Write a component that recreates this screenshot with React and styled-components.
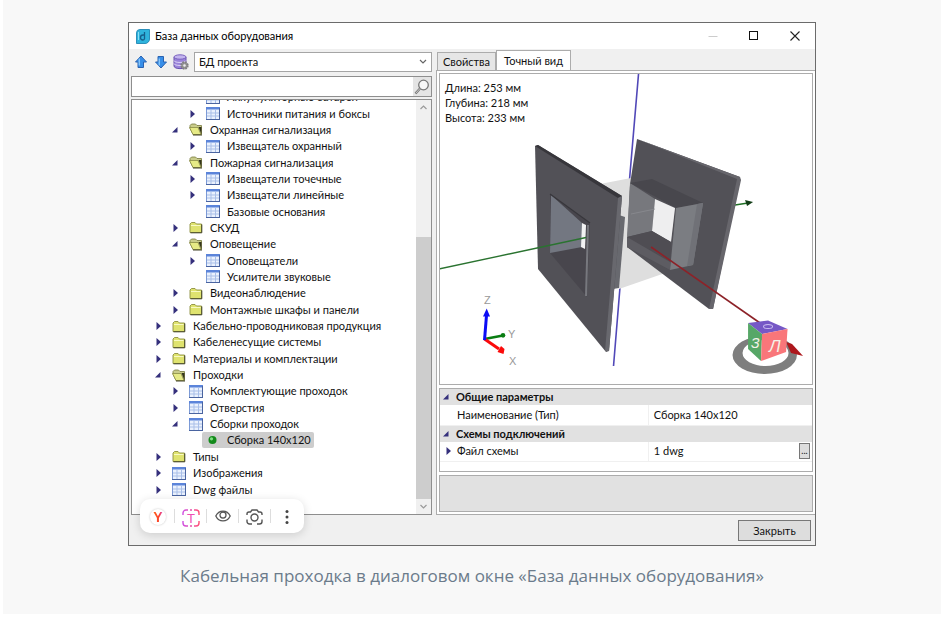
import React from "react";
import styled, { createGlobalStyle } from "styled-components";

const GlobalStyle = createGlobalStyle`
	* {
		box-sizing: border-box;
	}

	body {
		margin: 0;
		background: #fff;
	}

	button,
	input,
	select {
		font: inherit;
		color: inherit;
	}
`;

const TREE = [
	{ level: 2, icon: "table", label: "Аккумуляторные батареи" },
	{ level: 2, icon: "table", label: "Источники питания и боксы", arrow: "closed" },
	{ level: 1, icon: "open", label: "Охранная сигнализация", arrow: "open" },
	{ level: 2, icon: "table", label: "Извещатель охранный", arrow: "closed" },
	{ level: 1, icon: "open", label: "Пожарная сигнализация", arrow: "open" },
	{ level: 2, icon: "table", label: "Извещатели точечные", arrow: "closed" },
	{ level: 2, icon: "table", label: "Извещатели линейные", arrow: "closed" },
	{ level: 2, icon: "table", label: "Базовые основания" },
	{ level: 1, icon: "folder", label: "СКУД", arrow: "closed" },
	{ level: 1, icon: "open", label: "Оповещение", arrow: "open" },
	{ level: 2, icon: "table", label: "Оповещатели", arrow: "closed" },
	{ level: 2, icon: "table", label: "Усилители звуковые" },
	{ level: 1, icon: "folder", label: "Видеонаблюдение", arrow: "closed" },
	{ level: 1, icon: "folder", label: "Монтажные шкафы и панели", arrow: "closed" },
	{ level: 0, icon: "folder", label: "Кабельно-проводниковая продукция", arrow: "closed" },
	{ level: 0, icon: "folder", label: "Кабеленесущие системы", arrow: "closed" },
	{ level: 0, icon: "folder", label: "Материалы и комплектации", arrow: "closed" },
	{ level: 0, icon: "open", label: "Проходки", arrow: "open" },
	{ level: 1, icon: "table", label: "Комплектующие проходок", arrow: "closed" },
	{ level: 1, icon: "table", label: "Отверстия", arrow: "closed" },
	{ level: 1, icon: "table", label: "Сборки проходок", arrow: "open" },
	{ level: 2, icon: "dot", label: "Сборка 140x120", selected: true },
	{ level: 0, icon: "folder", label: "Типы", arrow: "closed" },
	{ level: 0, icon: "table", label: "Изображения", arrow: "closed" },
	{ level: 0, icon: "table", label: "Dwg файлы", arrow: "closed" },
	{ level: 0, icon: "table", label: "" },
];

function Arrow({ state }) {
	return (
		<svg width="12" height="10" viewBox="0 0 12 10">
			{state === "closed" && <path d="M4.500 1L9 5L4.500 9Z" fill="#35307c" />}
			{state === "open" && <path d="M8.500 2V7.500H3Z" fill="#35307c" />}
		</svg>
	);
}

function NodeIcon({ type }) {
	if (type === "table") {
		return (
			<svg width="14" height="13" viewBox="0 0 14 13">
				<rect x="0.5" y="0.5" width="13" height="12" fill="#eaf1fd" stroke="#7c9ad6" />
				<path d="M0 0h14v2.500H0z" fill="#5b84da" />
				<path d="M5 3v9M9.5 3v9M1 6h12M1 9h12" stroke="#a9bfe8" />
				<path d="M0 12.5h14M13.5 1v12" stroke="#4a64a0" />
			</svg>
		);
	}
	if (type === "dot") {
		return (
			<svg width="14" height="13" viewBox="0 0 14 13">
				<circle cx="6.5" cy="6" r="4" fill="#138a1b" />
				<circle cx="5.5" cy="4.8" r="1.6" fill="#7fe082" />
			</svg>
		);
	}
	return (
		<svg width="14" height="13" viewBox="0 0 14 13">
			{type === "open" ? (
				<>
					<path d="M1 5V2.500L2.500 1h4L8 2.500h4.500v9H4z" fill="#c9cc8b" stroke="#77793e" strokeWidth="0.8" />
					<path d="M0.5 4.500h8.500l3 7h-8z" fill="#e6ea86" stroke="#898c45" strokeWidth="0.8" />
					<path d="M9.500 4l3 7.500V4z" fill="#34351c" />
					<path d="M4 12h9" stroke="#44452a" />
				</>
			) : (
				<>
					<path d="M1 3L2.5 1.5h3.5L7.5 3h5v8.5H1z" fill="#dfe36f" stroke="#8d903f" strokeWidth="0.9" />
					<path d="M2 4.5h9.5" stroke="#f8fac4" />
					<path d="M1.5 11.8h11.3V3.5" fill="none" stroke="#44452a" />
				</>
			)}
		</svg>
	);
}

function BigArrow({ down }) {
	return (
		<svg width="14" height="14" viewBox="0 0 14 14">
			<path
				d={down ? "M7 13L1.5 7H4V1.5h5.5V7h3z" : "M7 1L1.5 7H4v5.5h5.5V7h3z"}
				fill="#378ee8"
				stroke="#2a62b0"
			/>
			<path d="M5.3 3.5v7" stroke="#83c4fb" strokeWidth="1.4" />
		</svg>
	);
}

function Scene() {
	return (
		<SceneSvg viewBox="440 74 372 310">
			<path d="M638.5 74L628 197M620 287L613.5 366" stroke="#5148b8" strokeWidth="1.6" />
			<path d="M735 205L748 203" stroke="#1e6e24" strokeWidth="1.3" />
			<path d="M745 200l8 2-6 4z" fill="#123d16" />

			<path d="M600 184L631 178L640 250L668 272L619 289z" fill="#dedede" />
			<path d="M637 139L740 177L713 309L709 309L627 247L630 184z" fill="#525157" />
			<path d="M637 139L740 177L741 180L713 309L709 309L737 179z" fill="#67666c" />
			<path d="M628 184L600 184L606 225L628 217z" fill="#dedede" />
			<path d="M630 183L655 199L652 231L627 237z" fill="#77787d" />
			<path d="M630 183L652 179L703 203L676 208z" fill="#48474d" />
			<path d="M655 199L675 208L671 242L652 231z" fill="#eeeeef" />
			<path d="M652 231L627 237L627 247L670 270L671 242z" fill="#4f4d53" />
			<path d="M627 237L670 262L670 270L627 247z" fill="#5d5c62" />
			<path d="M676 208L703 203L693 265L670 270z" fill="#7b7d82" />
			<path d="M697 204L703 203L693 265L687 266z" fill="#707177" />
			<path d="M631 214L655 209" stroke="#8a8b90" strokeWidth="0.8" />

			<path d="M619 215L625 217L619 288L613 289z" fill="#68696f" />
			<path d="M535 146L538 145L622 196L609 351L606 352L538 269z" fill="#525157" />
			<path d="M535 146L538 145L622 196L618 198z" fill="#37363b" />
			<path d="M618 198L622 196L609 351L605 351z" fill="#68686e" />
			<path d="M550 194L590 223L587 297L550 253z" fill="#48464d" />
			<path d="M551 195L582 223V247L550 253z" fill="#737781" />
			<path d="M582 223L586 225L585 249L581 247z" fill="#f2f2f3" />
			<path d="M550 194L590 223" stroke="#38373c" strokeWidth="1.2" />
			<path d="M588 225L586 296" stroke="#77787e" strokeWidth="2" />
			<path d="M439 269L586 237.500" stroke="#2a7330" strokeWidth="1.4" />

			<path d="M651 247L760 323" stroke="#8d2228" strokeWidth="1.6" />
			<path
				fillRule="evenodd"
				d="M732.500 355a32.200 19 0 1 0 64.400 0a32.200 19 0 1 0 -64.400 0zM742.500 353a23 13 0 1 0 46 0a23 13 0 1 0 -46 0z"
				fill="#7e7e7e"
			/>
			<path d="M786 342l6 2 11 12-12-3z" fill="#ad171c" />
			<path d="M748 323L768 320.500L787.500 329L762 334z" fill="#7658c6" />
			<path d="M748 323L762 334L761 361L748 349z" fill="#57a767" />
			<path d="M762 334L787.500 329L786 352L761 361z" fill="#f9767a" />
			<ellipse cx="768" cy="326.500" rx="4.500" ry="2" fill="none" stroke="#cabdf0" />
			<CubeText x="769" y="352" fontSize="17">Л</CubeText>
			<CubeText x="751" y="348" fontSize="14">З</CubeText>

			<path d="M484.500 339L503 335.500" stroke="#0a7d12" strokeWidth="2.600" />
			<circle cx="503" cy="335.300" r="2.300" fill="#0a7d12" />
			<path d="M484.500 339L499 349" stroke="#fb0a0a" strokeWidth="3" />
			<path d="M501 346l3.500 3-1 5-6-2z" fill="#fb0a0a" />
			<path d="M484.500 340L486.500 315" stroke="#0c0cf5" strokeWidth="3" />
			<path d="M486.700 308.500L490 316.500H483z" fill="#0c0cf5" />
			<AxisText x="484" y="304">Z</AxisText>
			<AxisText x="508" y="338">Y</AxisText>
			<AxisText x="509" y="365">X</AxisText>
		</SceneSvg>
	);
}

function TreePane() {
	return (
		<LeftPane>
			<ToolRow>
				<ToolButton type="button" aria-label="Вверх"><BigArrow /></ToolButton>
				<ToolButton type="button" aria-label="Вниз"><BigArrow down /></ToolButton>
				<ToolButton type="button" aria-label="База">
					<svg width="16" height="16" viewBox="0 0 16 16">
						<path d="M1 3v9c0 3.500 12 3.500 12 0V3z" fill="#9a84da" stroke="#6951af" />
						<ellipse cx="7" cy="3" rx="6" ry="2.200" fill="#c3b5ee" stroke="#7a62be" />
						<path d="M1 6.500c0 2.600 12 2.600 12 0M1 9.500c0 2.600 12 2.600 12 0" fill="none" stroke="#ded5f7" />
						<circle cx="11.500" cy="11.500" r="3.200" fill="#999" stroke="#808080" strokeWidth="2" strokeDasharray="1.700 0.800" />
						<circle cx="11.500" cy="11.500" r="1.200" fill="#eee" />
					</svg>
				</ToolButton>
				<SelectBox>
					<select aria-label="База данных">
						<option>БД проекта</option>
					</select>
					<svg width="8" height="6" viewBox="0 0 8 6">
						<path d="M1 1l3 3 3-3" fill="none" stroke="#666" strokeWidth="1.200" />
					</svg>
				</SelectBox>
			</ToolRow>
			<SearchRow>
				<input type="text" aria-label="Поиск" />
				<button type="button" aria-label="Найти">
					<svg width="16" height="16" viewBox="0 0 16 16">
						<circle cx="9.500" cy="6" r="4.800" fill="#f7f7f7" stroke="#777" strokeWidth="1.300" />
						<path d="M6 9.500L1.500 14.500" stroke="#777" strokeWidth="2.400" />
						<path d="M6 9.500L2 14" stroke="#ddd" strokeWidth="0.800" />
					</svg>
				</button>
			</SearchRow>
			<TreeBox>
				<TreeView>
					<TreeList>
						{TREE.map((node, i) => (
							<TreeRow key={i} $level={node.level}>
								<Arrow state={node.arrow} />
								<TreeLabel $selected={node.selected}>
									<NodeIcon type={node.icon} />
									{node.label}
								</TreeLabel>
							</TreeRow>
						))}
					</TreeList>
				</TreeView>
				<ScrollBar>
					<ScrollEnd>
						<svg width="7" height="5" viewBox="0 0 7 5"><path d="M0.500 4l3-3 3 3" fill="none" stroke="#9a9a9a" strokeWidth="1.200" /></svg>
					</ScrollEnd>
					<ScrollSpace />
					<ScrollThumb />
					<ScrollEnd>
						<svg width="7" height="5" viewBox="0 0 7 5"><path d="M0.500 1l3 3 3-3" fill="none" stroke="#9a9a9a" strokeWidth="1.200" /></svg>
					</ScrollEnd>
				</ScrollBar>
			</TreeBox>
		</LeftPane>
	);
}

function DetailsPane() {
	return (
		<RightPane>
			<Tabs role="tablist">
				<Tab type="button" role="tab" aria-selected="false">Свойства</Tab>
				<Tab type="button" role="tab" aria-selected="true" $active>Точный вид</Tab>
			</Tabs>
			<TabBody>
				<Viewport>
					<Dimensions>
						<li>Длина: 253 мм</li>
						<li>Глубина: 218 мм</li>
						<li>Высота: 233 мм</li>
					</Dimensions>
					<Scene />
				</Viewport>
				<PropsBox>
					<PropsTable>
						<colgroup>
							<MarkerCol />
							<col />
							<ValueCol />
						</colgroup>
						<tbody>
							<GroupRow>
								<td><Arrow state="open" /></td>
								<th colSpan="2">Общие параметры</th>
							</GroupRow>
							<PropRow>
								<td />
								<th>Наименование (Тип)</th>
								<td>Сборка 140x120</td>
							</PropRow>
							<GroupRow>
								<td><Arrow state="open" /></td>
								<th colSpan="2">Схемы подключений</th>
							</GroupRow>
							<PropRow>
								<td><Arrow state="closed" /></td>
								<th>Файл схемы</th>
								<td>
									<ValueCell>
										1 dwg
										<MoreButton type="button">...</MoreButton>
									</ValueCell>
								</td>
							</PropRow>
						</tbody>
					</PropsTable>
				</PropsBox>
				<Description />
			</TabBody>
		</RightPane>
	);
}

function ImageTools() {
	return (
		<FloatBar>
			<FloatButton type="button" aria-label="Яндекс"><YMark><span>Y</span></YMark></FloatButton>
			<FloatButton type="button" aria-label="Текст">
				<svg width="18" height="18" viewBox="0 0 18 18">
					<defs>
						<linearGradient id="pink" x1="0" x2="1">
							<stop offset="0" stopColor="#cf4fe0" />
							<stop offset="1" stopColor="#ff4f78" />
						</linearGradient>
					</defs>
					<path
						d="M1 6V4a3 3 0 0 1 3-3h2M12 1h2a3 3 0 0 1 3 3v2M17 12v2a3 3 0 0 1-3 3h-2M6 17H4a3 3 0 0 1-3-3v-2M8 1h2M8 17h2"
						fill="none"
						stroke="url(#pink)"
						strokeWidth="1.400"
					/>
					<ScanText x="9" y="13.500">T</ScanText>
				</svg>
			</FloatButton>
			<FloatButton type="button" aria-label="Просмотр">
				<svg width="16" height="12" viewBox="0 0 16 12" fill="none" stroke="#555" strokeWidth="1.300">
					<path d="M0.800 6C4-0.600 12-0.600 15.200 6C12 12.600 4 12.600 0.800 6z" />
					<circle cx="8" cy="5" r="3" />
				</svg>
			</FloatButton>
			<FloatButton type="button" aria-label="Поиск по картинке">
				<svg width="17" height="16" viewBox="0 0 17 16" fill="none" stroke="#555" strokeWidth="1.400">
					<path d="M1 6V5a2 2 0 0 1 2-2h1.500L6 1h5l1.500 2H14a2 2 0 0 1 2 2v1M1 10.500V12.500a2.500 2.500 0 0 0 2.500 2.500H6M16 10.500V12.500a2.500 2.500 0 0 1-2.500 2.500H11" />
					<circle cx="8.500" cy="8.500" r="3.500" />
				</svg>
			</FloatButton>
			<FloatButton type="button" aria-label="Ещё">
				<svg width="4" height="16" viewBox="0 0 4 16" fill="#444">
					<circle cx="2" cy="2.500" r="1.500" />
					<circle cx="2" cy="8" r="1.500" />
					<circle cx="2" cy="13.500" r="1.500" />
				</svg>
			</FloatButton>
		</FloatBar>
	);
}

function App() {
	return (
		<Page>
			<GlobalStyle />
			<Card>
				<Dialog>
					<TitleBar>
						<svg width="14" height="15" viewBox="0 0 14 15">
							<path d="M4 0.500h9.500V10a4.500 4.500 0 0 1-4.500 4.500H0.500V4A3.500 3.500 0 0 1 4 0.500z" fill="#2fb4dd" stroke="#2b8fba" />
							<path d="M8.500 3v7M8.500 6H7a2 2 0 0 0 0 5c1.200 0 1.500-0.500 1.500-1.500" fill="none" stroke="#15608c" strokeWidth="1.300" />
							<path d="M2.500 3v8" stroke="#8be0f5" />
						</svg>
						<h1>База данных оборудования</h1>
						<WindowButton type="button" aria-label="Свернуть" disabled>
							<svg width="10" height="10" viewBox="0 0 10 10"><path d="M0.500 5.500h9" stroke="#ccc" /></svg>
						</WindowButton>
						<WindowButton type="button" aria-label="Развернуть">
							<svg width="10" height="10" viewBox="0 0 10 10"><rect x="0.500" y="0.500" width="8" height="8" fill="none" stroke="#111" /></svg>
						</WindowButton>
						<WindowButton type="button" aria-label="Закрыть окно">
							<svg width="10" height="10" viewBox="0 0 10 10"><path d="M0.500 0.500l9 9M9.500 0.500l-9 9" stroke="#222" strokeWidth="1.100" /></svg>
						</WindowButton>
					</TitleBar>
					<Panes>
						<TreePane />
						<DetailsPane />
					</Panes>
					<Footer>
						<CloseButton type="button">Закрыть</CloseButton>
					</Footer>
					<ImageTools />
				</Dialog>
				<figcaption>Кабельная проходка в диалоговом окне «База данных оборудования»</figcaption>
			</Card>
		</Page>
	);
}

const Page = styled.main`
	padding: 0 2px 0 3px;
`;

const Card = styled.figure`
	margin: 0;
	padding: 22px 125px 26px;
	background: #f8f8f8;

	figcaption {
		margin-top: 18px;
		text-align: center;
		white-space: nowrap;
		font: 17px/24px "Open Sans", sans-serif;
		color: #6b7b8b;
	}
`;

const Dialog = styled.section`
	position: relative;
	border: 1px solid #6b6b6b;
	background: #f0f0f0;
	font: 11px/16px Lato, "Open Sans", sans-serif;
	color: #111;
`;

const TitleBar = styled.header`
	display: flex;
	align-items: center;
	height: 26px;
	padding-left: 7px;
	background: #fff;

	h1 {
		flex: 1;
		margin: 0 0 0 5px;
		font-size: 11px;
		font-weight: 400;
		color: #000;
	}
`;

const WindowButton = styled.button`
	display: grid;
	place-items: center;
	width: 41px;
	height: 26px;
	padding: 0;
	border: 0;
	background: transparent;
`;

const Panes = styled.div`
	display: grid;
	grid-template-columns: 44% minmax(0, 1fr);
	gap: 4px;
	padding-left: 2px;
`;

const LeftPane = styled.div`
	display: flex;
	flex-direction: column;
	min-width: 0;
	padding-top: 3px;
`;

const ToolRow = styled.div`
	display: flex;
	align-items: center;
	gap: 4px;
	padding-left: 2px;
`;

const ToolButton = styled.button`
	display: grid;
	place-items: center;
	width: 16px;
	height: 20px;
	padding: 0;
	border: 0;
	background: transparent;
`;

const SelectBox = styled.div`
	display: flex;
	align-items: center;
	flex: 1;
	height: 20px;
	margin-left: 1px;
	padding-right: 4px;
	border: 1px solid #a5a5a5;
	background: #fff;

	select {
		flex: 1;
		padding: 0 4px;
		border: 0;
		background: transparent;
		appearance: none;
	}
`;

const SearchRow = styled.div`
	display: flex;
	height: 21px;
	margin-top: 4px;
	border: 1px solid #8e8e8e;

	input {
		flex: 1;
		min-width: 0;
		padding: 0 4px;
		border: 0;
		background: #fff;
	}

	button {
		display: grid;
		place-items: center;
		width: 18px;
		padding: 0;
		border: 0;
		background: #e4e4e4;
	}
`;

const TreeBox = styled.div`
	display: flex;
	flex: 1;
	margin-top: 2px;
	border: 1px solid #8e8e8e;
	background: #fff;
`;

const TreeView = styled.div`
	display: flex;
	flex: 1;
	min-width: 0;
	overflow: hidden;
`;

const TreeList = styled.ul`
	flex: 1;
	display: grid;
	grid-auto-rows: 1fr;
	margin: -11px 0 0;
	padding: 0;
	list-style: none;
`;

const TreeRow = styled.li`
	display: flex;
	align-items: center;
	gap: 4px;
	padding-left: ${({ $level }) => 20 + $level * 17}px;
	white-space: nowrap;
`;

const TreeLabel = styled.span`
	display: flex;
	align-items: center;
	gap: 7px;
	padding: 0 3px 0 4px;
	border-radius: 2px;
	background: ${({ $selected }) => ($selected ? "#cdcdcd" : "transparent")};
`;

const ScrollBar = styled.div`
	display: flex;
	flex-direction: column;
	width: 15px;
	background: #f0f0f0;
`;

const ScrollEnd = styled.div`
	display: grid;
	place-items: center;
	height: 15px;
`;

const ScrollSpace = styled.div`
	flex: 122;
`;

const ScrollThumb = styled.div`
	flex: 262;
	background: #cdcdcd;
`;

const RightPane = styled.div`
	display: flex;
	flex-direction: column;
	min-width: 0;
`;

const Tabs = styled.div`
	display: flex;
	align-items: flex-end;
	height: 21px;
	padding-left: 1px;
`;

const Tab = styled.button`
	height: ${({ $active }) => ($active ? 21 : 18)}px;
	margin-bottom: ${({ $active }) => ($active ? -1 : 0)}px;
	padding: 0 ${({ $active }) => ($active ? 7 : 5)}px;
	border: 1px solid #acacac;
	border-bottom: 0;
	background: ${({ $active }) => ($active ? "#fff" : "#e6e6e6")};
	white-space: nowrap;
`;

const TabBody = styled.div`
	display: flex;
	flex-direction: column;
	gap: 3px;
	padding: 2px;
	border: 1px solid #acacac;
	border-right-width: 0;
	background: #fff;
`;

const Viewport = styled.div`
	position: relative;
	border: 1px solid #acacac;
	background: #fff;
`;

const Dimensions = styled.ul`
	position: absolute;
	left: 5px;
	top: 6px;
	margin: 0;
	padding: 0;
	list-style: none;
	line-height: 15px;
`;

const SceneSvg = styled.svg`
	display: block;
	width: 100%;
`;

const AxisText = styled.text`
	font: 11px "Liberation Sans", sans-serif;
	fill: #999;
`;

const CubeText = styled.text`
	font-family: "Liberation Sans", sans-serif;
	font-style: italic;
	fill: #f4f1e8;
`;

const PropsBox = styled.div`
	padding-bottom: 9px;
	border: 1px solid #acacac;
`;

const PropsTable = styled.table`
	width: 100%;
	border-collapse: collapse;
	table-layout: fixed;

	th,
	td {
		padding: 0;
		text-align: left;
	}

	svg {
		display: block;
	}
`;

const MarkerCol = styled.col`
	width: 16px;
`;

const ValueCol = styled.col`
	width: 44%;
`;

const GroupRow = styled.tr`
	height: 16px;
	background: #e1e1e1;

	th {
		font-weight: 700;
		color: #111;
	}
`;

const PropRow = styled.tr`
	height: 20px;
	border-bottom: 1px solid #f0f0f0;

	td:first-child svg {
		margin-left: 2px;
	}

	th {
		padding-left: 1px;
		font-weight: 400;
	}

	td:last-child {
		padding-left: 5px;
		border-left: 1px solid #f0f0f0;
	}
`;

const ValueCell = styled.div`
	display: flex;
	align-items: center;
	justify-content: space-between;
	padding-right: 2px;
`;

const MoreButton = styled.button`
	width: 11px;
	height: 16px;
	padding: 0;
	border: 1px solid #777;
	background: #ddd;
	font-size: 9px;
	line-height: 14px;
`;

const Description = styled.div`
	height: 37px;
	border: 1px solid #acacac;
	background: #e1e1e1;
`;

const Footer = styled.footer`
	display: flex;
	justify-content: flex-end;
	padding: 5px 4px 4px;
`;

const CloseButton = styled.button`
	width: 73px;
	height: 21px;
	padding: 0;
	border: 1px solid #777;
	background: #ddd;
`;

const FloatBar = styled.div`
	position: absolute;
	left: 11px;
	bottom: 12px;
	display: flex;
	align-items: center;
	height: 34px;
	padding: 0 2px;
	border-radius: 10px;
	background: #fff;
	box-shadow: 0 2px 10px rgba(0, 0, 0, 0.15);
`;

const FloatButton = styled.button`
	display: grid;
	place-items: center;
	width: 32px;
	height: 14px;
	padding: 0;
	border: 0;
	border-left: 1px solid #ddd;
	background: transparent;

	&:first-child {
		border-left: 0;
	}
`;

const YMark = styled.span`
	width: 16px;
	height: 16px;
	border-radius: 50%;
	box-shadow: 0 0 2px rgba(0, 0, 0, 0.25);
	font: 700 14px/16px "Liberation Sans", sans-serif;

	span {
		background: linear-gradient(to right, #ff5a1c 20%, #fb3f2c 60%, #d850d8);
		background-clip: text;
		color: transparent;
	}
`;

const ScanText = styled.text`
	font: 13px "Liberation Sans", sans-serif;
	text-anchor: middle;
	fill: #ee4fb4;
`;

export default App;
